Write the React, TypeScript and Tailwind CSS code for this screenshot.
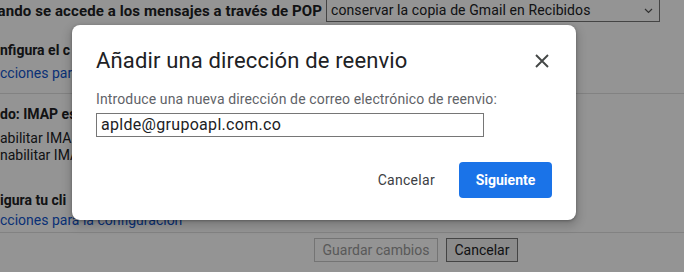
import React from "react";

export default function App() {
  const font = { fontFamily: "Roboto, 'Liberation Sans', Arial, sans-serif" };
  return (
    <div className="relative w-[684px] h-[272px] overflow-hidden bg-white text-[#202124]" style={font}>
      {/* Background settings page */}
      <div className="flex flex-col">
        <div className="flex h-[22px] items-center">
          <div className="w-[322px] flex justify-end overflow-hidden whitespace-nowrap">
            <span className="text-[15px] font-bold tracking-[0.1px]">ando se accede a los mensajes a través de POP</span>
          </div>
          <div className="ml-[4px] -mt-[2px] w-[334px] h-[24px] border border-[#767676] flex items-center justify-between pl-[4px] pr-[6px] text-[14px] tracking-[0.1px] bg-white">
            <span>conservar la copia de Gmail en Recibidos</span>
            <svg width="9" height="6" viewBox="0 0 9 6" className="mt-[1px]"><path d="M1 1l3.5 3.5L8 1" fill="none" stroke="#555" strokeWidth="1.2" /></svg>
          </div>
        </div>
        <div className="pt-[20px] flex flex-col">
          <div className="w-[72px] overflow-hidden h-[17px] leading-[17px] text-[14px] font-bold whitespace-nowrap">nfigura el c</div>
          <div className="w-[72px] overflow-hidden mt-[6px] h-[17px] leading-[17px] text-[14px] text-[#1155cc] whitespace-nowrap">cciones par</div>
        </div>
        <div className="mt-[11px] h-px bg-[#e0e0e0]" />
        <div className="pt-[12px] flex flex-col">
          <div className="w-[72px] overflow-hidden h-[17px] leading-[17px] text-[14px] font-bold whitespace-nowrap">do: IMAP es</div>
          <div className="w-[72px] overflow-hidden mt-[7px] h-[17px] leading-[17px] text-[14px] whitespace-nowrap">abilitar IMAP</div>
          <div className="w-[72px] overflow-hidden mt-[0px] h-[17px] leading-[17px] text-[14px] whitespace-nowrap">nabilitar IMA</div>
        </div>
        <div className="pt-[28px] flex flex-col">
          <div className="w-[72px] overflow-hidden h-[17px] leading-[17px] text-[14px] font-bold whitespace-nowrap">igura tu cli</div>
          <div className="mt-[3px] h-[17px] leading-[17px] text-[14px] text-[#1155cc] whitespace-nowrap">cciones para la configuración</div>
        </div>
        <div className="mt-[3px] h-px bg-[#e0e0e0]" />
        <div className="pt-[5px] flex pl-[314px] gap-[8px]">
          <div className="h-[24px] w-[124px] border border-[#c8c8c8] text-[#9a9a9a] text-[14px] flex items-center justify-center">Guardar cambios</div>
          <div className="h-[24px] w-[72px] border border-[#767676] bg-[#efefef] text-[14px] flex items-center justify-center">Cancelar</div>
        </div>
      </div>

      {/* Overlay */}
      <div className="absolute inset-0 bg-black/[0.42]" />

      {/* Dialog */}
      <div className="absolute left-[72px] top-[25px] w-[504px] h-[195px] bg-white rounded-[8px] shadow-[0_4px_8px_3px_rgba(0,0,0,0.15),0_1px_3px_rgba(0,0,0,0.3)] flex flex-col pl-[24px] pr-[24px]">
        <div className="flex items-center justify-between pt-[22px]">
          <div className="text-[22px] leading-[28px] tracking-[0.15px] text-[#202124]">Añadir una dirección de reenvio</div>
          <svg width="14" height="14" viewBox="0 0 14 14" className="mr-[3px]"><path d="M1 1L13 13M13 1L1 13" stroke="#444746" strokeWidth="1.9" /></svg>
        </div>
        <div className="mt-[15px] text-[14px] leading-[18px] tracking-[0.13px] text-[#5f6368]">Introduce una nueva dirección de correo electrónico de reenvio:</div>
        <div className="mt-[5px] w-[388px] h-[24px] border border-[#767676] flex items-center pl-[4px] text-[16px] tracking-[0.3px] text-[#202124]">aplde@grupoapl.com.co</div>
        <div className="mt-[25px] flex justify-end items-center">
          <div className="text-[14px] font-normal tracking-[0.3px] text-[#3c4043] mr-[24px]">Cancelar</div>
          <div className="h-[36px] w-[93px] rounded-[4px] bg-[#1a73e8] text-white text-[14px] font-bold flex items-center justify-center">Siguiente</div>
        </div>
      </div>
    </div>
  );
}
